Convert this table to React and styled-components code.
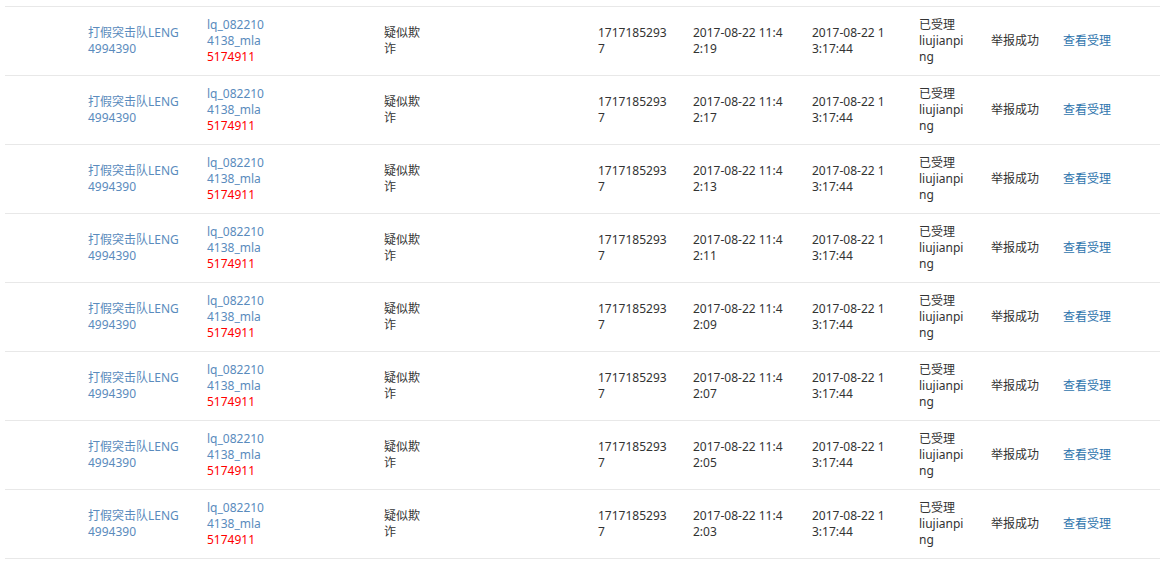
import React from "react";
import styled, { createGlobalStyle } from "styled-components";

const GlobalStyle = createGlobalStyle`
  body {
    margin: 0;
    background: #fff;
    font-family: "Noto Sans", "Noto Sans CJK SC", sans-serif;
    font-size: 12px;
    color: #333;
  }
`;

const times = ["2:19", "2:17", "2:13", "2:11", "2:09", "2:07", "2:05", "2:03"];

const reports = times.map((t, i) => ({
  id: i,
  reporter: "打假突击队LENG4994390",
  account: "lq_0822104138_mla",
  accountNo: "5174911",
  reason: "疑似欺诈",
  phone: "17171852937",
  createdAt: "2017-08-22 11:4" + t,
  handledAt: "2017-08-22 13:17:44",
  status: "已受理",
  handler: "liujianping",
  result: "举报成功",
}));

const cols = [75, 119, 177, 214, 95, 119, 107, 72, 72, 105];

const Page = styled.div`
  padding: 6px 10px 0 5px;
`;

const Table = styled.table`
  width: 1155px;
  border-collapse: collapse;
  table-layout: fixed;
`;

const Row = styled.tr`
  border-top: 1px solid #e8e8e8;
  border-bottom: 1px solid #e8e8e8;
`;

const Cell = styled.td`
  height: 48px;
  padding: 10px 8px;
  vertical-align: middle;
  line-height: 16px;
  color: ${(p) => p.$color || "#333"};
  white-space: ${(p) => (p.$nowrap ? "nowrap" : "normal")};
`;

const Wrap = styled.div`
  width: ${(p) => p.$w}px;
  word-break: break-all;
`;

const Red = styled.div`
  color: #f00;
`;

const Link = styled.a`
  color: #2e74ad;
  text-decoration: none;
  cursor: pointer;
`;

export default function App() {
  return (
    <Page>
      <GlobalStyle />
      <Table>
        <colgroup>
          {cols.map((w, i) => (
            <col key={i} style={{ width: w }} />
          ))}
        </colgroup>
        <tbody>
          {reports.map((r) => (
            <Row key={r.id}>
              <Cell />
              <Cell $color="#5a8bbd">
                <Wrap $w={94}>{r.reporter}</Wrap>
              </Cell>
              <Cell $color="#5a8bbd">
                <Wrap $w={61}>{r.account}</Wrap>
                <Red>{r.accountNo}</Red>
              </Cell>
              <Cell>
                <Wrap $w={40}>{r.reason}</Wrap>
              </Cell>
              <Cell>
                <Wrap $w={72}>{r.phone}</Wrap>
              </Cell>
              <Cell>
                <Wrap $w={92}>{r.createdAt}</Wrap>
              </Cell>
              <Cell>
                <Wrap $w={76}>{r.handledAt}</Wrap>
              </Cell>
              <Cell>
                <div>{r.status}</div>
                <Wrap $w={47}>{r.handler}</Wrap>
              </Cell>
              <Cell $nowrap>{r.result}</Cell>
              <Cell $nowrap>
                <Link>查看受理</Link>
              </Cell>
            </Row>
          ))}
        </tbody>
      </Table>
    </Page>
  );
}
